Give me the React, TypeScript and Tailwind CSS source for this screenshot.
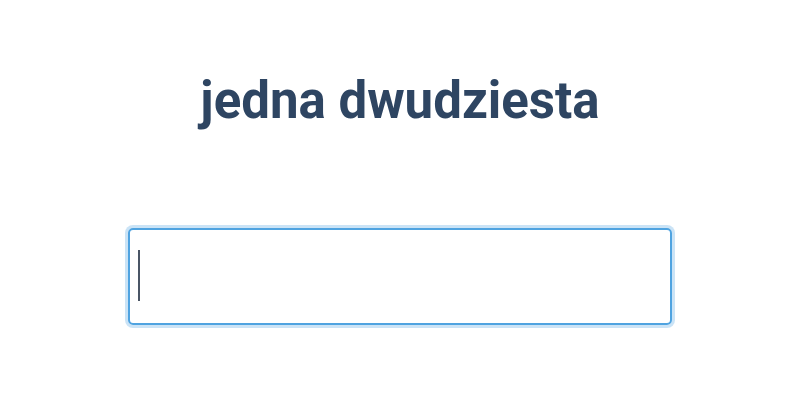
export default function App() {
  return (
    <main className="min-h-screen bg-white flex flex-col items-center font-['Roboto',sans-serif] text-[#2e4562]">
      <h1 className="mt-[71px] text-[51px] leading-[60px] font-bold">jedna dwudziesta</h1>
      <div className="relative mt-[97px]">
        <input
          type="text"
          aria-label="odpowiedź"
          className="block w-[544px] h-[97px] rounded-[5px] border-2 border-[#4fa3e0] px-[10px] text-[40px] text-[#2e4562] outline-none shadow-[0_0_0_3px_rgba(79,163,224,0.3)]"
        />
        <span className="pointer-events-none absolute left-[10px] top-[22px] h-[51px] w-[2px] bg-[#4a5565]" />
      </div>
    </main>
  );
}
